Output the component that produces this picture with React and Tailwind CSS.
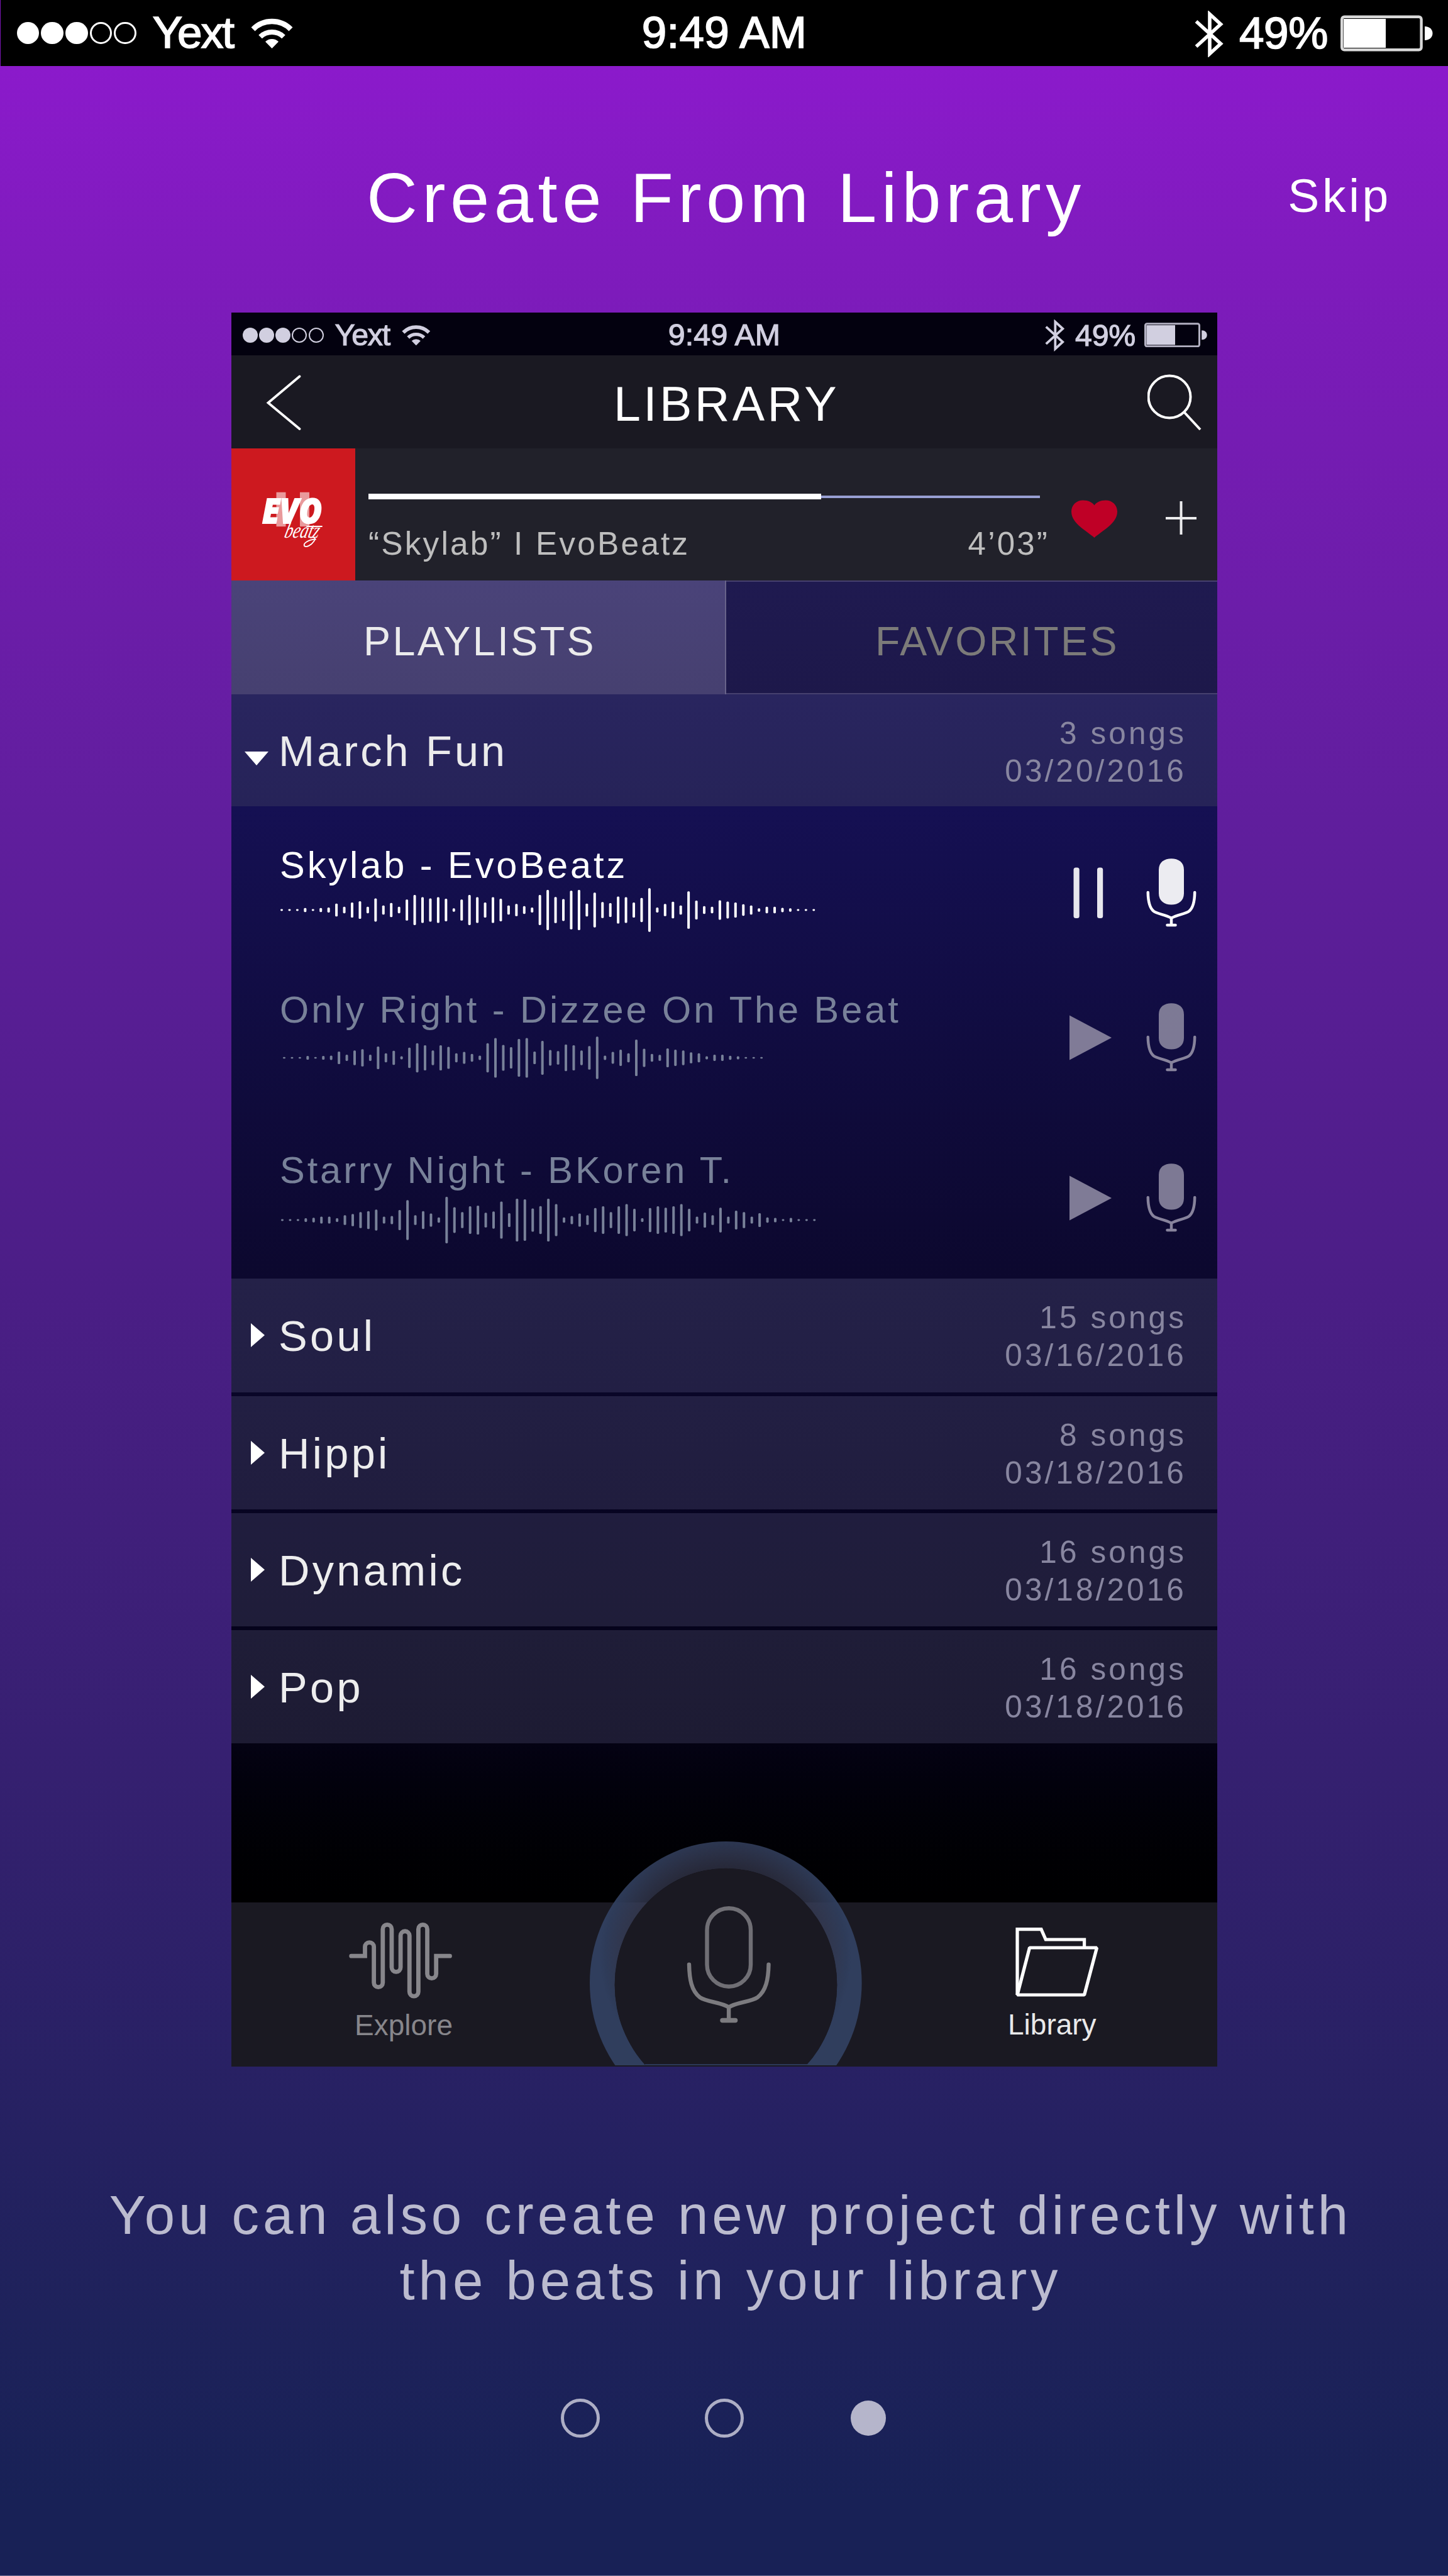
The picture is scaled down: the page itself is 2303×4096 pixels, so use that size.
import React from "react";

const WAVE_A = [
  12, 12, 12, 27, 12, 27, 32, 84, 42, 98, 114, 42, 150, 60, 92, 42, 137, 195, 167, 151, 167, 146, 22,
  137, 195, 167, 98, 167, 146, 60, 80, 50, 32, 195, 260, 169, 142, 251, 260, 84, 225, 104, 90, 176,
  167, 98, 156, 282, 32, 80, 108, 60, 242, 122, 50, 42, 127, 109, 98, 75, 60, 22, 42, 42, 28, 22, 12,
  12, 12,
];

const WAVE_B = [
  11, 11, 11, 25, 11, 25, 28, 82, 40, 95, 112, 40, 147, 58, 92, 20, 132, 189, 163, 95, 163, 143, 58, 78,
  50, 28, 189, 257, 167, 139, 245, 257, 82, 219, 101, 88, 172, 163, 95, 153, 274, 28, 77, 105, 58, 237,
  118, 50, 39, 123, 105, 95, 72, 58, 20, 40, 40, 26, 20, 11, 11, 11,
];

const WAVE_C = [...WAVE_A].reverse().map((h) => (h > 12 ? h * 1.067 : h));

const SONGS = [
  {
    title: "Skylab - EvoBeatz",
    wave: WAVE_A,
    playing: true,
    row: "h-[230px] text-white",
    waveBox: "mt-[2px] ml-[1px] text-white",
  },
  {
    title: "Only Right - Dizzee On The Beat",
    wave: WAVE_B,
    row: "h-[255px] text-[#788199]",
    waveBox: "mt-[7px] ml-[5px]",
  },
  {
    title: "Starry Night - BKoren T.",
    wave: WAVE_C,
    row: "h-[266px] text-[#788199]",
    waveBox: "mt-[10px] ml-[2px]",
  },
];

const PLAYLISTS = [
  { name: "Soul", songs: "15 songs", date: "03/16/2016", row: "h-[181px] from-[#242148] to-[#221f44]" },
  { name: "Hippi", songs: "8 songs", date: "03/18/2016", row: "h-[180px] from-[#221f43] to-[#201d3e]" },
  { name: "Dynamic", songs: "16 songs", date: "03/18/2016", row: "h-[180px] from-[#201d3e] to-[#1f1d39]" },
  { name: "Pop", songs: "16 songs", date: "03/18/2016", row: "h-[180px] from-[#1f1d38] to-[#1d1b33]" },
];

/* Sized entirely in em so that the same bar serves both screens. */
function StatusBar() {
  return (
    <div className="grid h-[1.479em] grid-cols-[1fr_auto_1fr] items-center leading-none [-webkit-text-stroke:0.024em_currentColor]">
      <div className="flex items-center pl-[0.365em]">
        <div className="flex gap-[0.043em]">
          {[true, true, true, false, false].map((full, i) => (
            <span
              key={i}
              className={
                full
                  ? "size-[0.5em] rounded-full bg-current"
                  : "size-[0.5em] rounded-full border-[0.045em] border-current"
              }
            />
          ))}
        </div>
        <span className="-mt-[0.02em] ml-[0.37em] w-[2.2em] tracking-[-0.025em]">Yext</span>
        <svg viewBox="0 0 67 49" className="h-[0.69em] w-[0.944em]" fill="none" stroke="currentColor">
          <path d="M3.5 18.5a42.5 42.5 0 0 1 60 0" strokeWidth="8.5" />
          <path d="M15 30.5a26.5 26.5 0 0 1 37 0" strokeWidth="8" />
          <path d="M33.5 49L23 38.3a15 15 0 0 1 21 0z" fill="currentColor" stroke="none" />
        </svg>
      </div>
      <span className="-mt-[0.02em] tracking-[0.004em]">9:49 AM</span>
      <div className="flex items-center justify-end pr-[0.34em]">
        <svg
          viewBox="0 0 46 74"
          className="mt-[0.03em] h-[1.042em] w-[0.648em]"
          fill="none"
          stroke="currentColor"
          strokeWidth="5.600"
        >
          <path d="M2.5 17L41.5 52.5L24 68.500V5.500L41.5 21.500L2.5 57" />
        </svg>
        <span className="ml-[0.355em] tracking-[-0.005em]">49%</span>
        <svg viewBox="0 0 147 58" className="ml-[0.28em] h-[0.817em] w-[2.07em]">
          <rect x="2.2" y="2.7" width="126.400" height="52.600" rx="4" fill="none" stroke="currentColor" strokeWidth="4.400" opacity="0.85" />
          <rect x="5" y="6" width="67" height="46" fill="currentColor" />
          <path d="M134 18c8 0 12.500 5 12.500 11s-4.500 11-12.500 11z" fill="currentColor" />
        </svg>
      </div>
    </div>
  );
}

function MicIcon() {
  return (
    <svg viewBox="0 0 80 109" className="h-[109px] w-[80px]" fill="none">
      <path
        d="M20 18C20 6 29 0.300 40 0.300S60 6 60 18V55.500C60 67.500 51 73.500 40 73.500S20 67.500 20 55.500Z"
        fill="currentColor"
        opacity="0.92"
      />
      <g stroke="currentColor" strokeWidth="4.500" strokeLinecap="round">
        <path d="M2.800 54C3 68 5 78.500 12 84C18 88.500 30 89 40 94.800C50 89 62 88.500 68 84C75 78.500 77 68 77.200 54" />
        <path d="M40 95V105" strokeLinecap="butt" />
        <path d="M33.500 106H46.500" />
      </g>
    </svg>
  );
}

function Waveform({ bars }) {
  return (
    <svg width={bars.length * 12.445} height="78" fill="currentColor">
      {bars.map((v, i) => {
        const h = v * 0.2457;
        return <rect key={i} x={i * 12.445} y={39 - h / 2} width="4" height={h} rx="1.600" />;
      })}
    </svg>
  );
}

function Meta({ songs, date }) {
  return (
    <div className="mt-[32px] ml-auto pr-[49px] text-right text-[49.5px] leading-[60px] tracking-[4.1px] text-[#8886a0]">
      <div>{songs}</div>
      <div>{date}</div>
    </div>
  );
}

function SongRow({ song }) {
  return (
    <div className={"flex items-start pl-[77px] pr-[33px] " + song.row}>
      <div className="pt-[64px]">
        <div className="text-[59.5px] leading-none tracking-[3.95px] whitespace-nowrap">{song.title}</div>
        <div className={song.waveBox}>
          <Waveform bars={song.wave} />
        </div>
      </div>
      <div className={song.playing ? "mt-[83px] ml-auto flex items-center gap-[55px]" : "mt-[83px] ml-auto flex items-center gap-[55px] text-[#87839c]"}>
        <svg viewBox="0 0 67 82" className="h-[82px] w-[67px]" fill="currentColor">
          {song.playing ? (
            <g opacity="0.9">
              <rect x="6.500" y="0.500" width="9.200" height="80.500" rx="3.500" />
              <rect x="44" y="0.500" width="9.200" height="80.500" rx="3.500" />
            </g>
          ) : (
            <path d="M0 5.500L67 41L0 76.500Z" opacity="0.94" />
          )}
        </svg>
        <MicIcon />
      </div>
    </div>
  );
}

function PlaylistRow({ item }) {
  return (
    <div className={"flex items-start bg-linear-to-b " + item.row}>
      <svg viewBox="0 0 22 38" className="mt-[71px] ml-[31px] h-[38px] w-[22px]" fill="#fff">
        <path d="M0 0L22 19L0 38Z" />
      </svg>
      <div className="mt-[58px] ml-[22px] text-[68.5px] leading-none tracking-[4.3px] text-[#ededee]">{item.name}</div>
      <Meta songs={item.songs} date={item.date} />
    </div>
  );
}

function CoverArt() {
  return (
    <svg viewBox="0 0 197 210" className="h-[210px] w-[197px] bg-[#cd191f]">
      <g fill="#fff" fillOpacity="0.56">
        <rect x="71.500" y="69.700" width="15" height="54.500" />
        <rect x="109" y="69.700" width="15" height="54.500" />
      </g>
      <text
        x="49"
        y="118.500"
        fill="#fff"
        stroke="#fff"
        strokeWidth="1.800"
        fontSize="55"
        fontStyle="italic"
        fontWeight="800"
        textLength="95"
        lengthAdjust="spacingAndGlyphs"
        className="font-['Open_Sans',sans-serif]"
      >
        EVO
      </text>
      <text
        x="0"
        y="0"
        fill="#fff"
        fontSize="35"
        fontStyle="italic"
        textLength="55"
        lengthAdjust="spacingAndGlyphs"
        transform="translate(83 142) skewX(-14)"
        className="font-['Liberation_Serif',serif]"
      >
        beatz
      </text>
      <g fill="none" stroke="#fff" strokeWidth="1.800" strokeLinecap="round">
        <path d="M120 124H144" />
        <path d="M126 142C132 140 135 143 131 148C127 154 119 158 116 155C114 151 122 145 134 144.500" />
      </g>
    </svg>
  );
}

function Player() {
  return (
    <div className="flex h-[210px] bg-[#21212a]">
      <CoverArt />
      <div className="ml-[21px] w-[1083px]">
        <div className="mt-[72px] flex h-[9px] w-[1068px] items-center">
          <div className="h-[9px] w-[720px] bg-white" />
          <div className="h-[4px] flex-1 bg-[#989fd3]" />
        </div>
        <div className="mt-[45px] flex items-start justify-between text-[51.5px] leading-none text-[#bebebe]">
          <span className="tracking-[3.1px]">“Skylab” I EvoBeatz</span>
          <span className="text-[51px] tracking-[3.2px]">4’03”</span>
        </div>
      </div>
      <svg viewBox="0 0 73 60" className="mt-[82px] ml-[35px] h-[60px] w-[73px]" fill="#bf0026">
        <path d="M36.500 60C26 50 0 38 0 18.500C0 8 8 0.500 18.500 0.500C27 0.500 33.500 4 36.500 8.500C39.500 4 46 0.500 54.500 0.500C65 0.500 73 8 73 18.500C73 38 47 50 36.500 60Z" />
      </svg>
      <svg viewBox="0 0 49 53" className="mt-[84px] ml-[77px] h-[53px] w-[49px]" stroke="#ececee" strokeWidth="4">
        <path d="M24.500 0V53M0 27H49" />
      </svg>
    </div>
  );
}

function RecordButton() {
  return (
    <svg viewBox="0 0 433 356" className="absolute bottom-[2px] left-[570px] h-[356px] w-[433px]">
      <defs>
        <radialGradient id="ring" gradientUnits="userSpaceOnUse" cx="216" cy="182" r="200">
          <stop offset="0.680" stopColor="#3f4159" stopOpacity="0.600" />
          <stop offset="0.960" stopColor="#303e5d" stopOpacity="0.930" />
          <stop offset="1" stopColor="#303e5d" />
        </radialGradient>
      </defs>
      <path
        fillRule="evenodd"
        fill="url(#ring)"
        d="M0 225a216.300 225 0 1 1 432.600 0a216.300 225 0 1 1 -432.600 0ZM39.800 228a176.700 185 0 1 0 353.400 0a176.700 185 0 1 0 -353.400 0Z"
      />
      <ellipse cx="216.500" cy="228" rx="176.900" ry="185.200" fill="#1a1922" />
      <rect x="88" y="354" width="258" height="2" fill="#2c3958" />
      <g transform="translate(154.500 102.700)" fill="none" strokeWidth="6.400">
        <rect x="32" y="3.500" width="69.500" height="124.500" rx="34.700" stroke="#706f75" />
        <g stroke="#7c7b7f" strokeLinecap="round">
          <path d="M3.500 93C4 116 7 135 21 145.500C31 152.500 55 153 66.600 161C78 153 102 152.500 112 145.500C126 135 129.500 116 130 93" />
          <path d="M66.600 161V180" strokeLinecap="butt" />
          <path d="M56.500 181.700H77" strokeWidth="7.500" />
        </g>
      </g>
    </svg>
  );
}

function BottomNav() {
  return (
    <div className="relative flex h-[261px] items-start bg-[#1a1922]">
      <div className="mt-[32px] ml-[187px] w-[170px] text-[#87868b]">
        <svg
          viewBox="0 0 165 121"
          className="h-[121px] w-[165px]"
          fill="none"
          stroke="currentColor"
          strokeWidth="6.800"
          strokeLinecap="round"
        >
          <path d="M3.700 53.200H25.500V38.600a7.070 7.070 0 0 1 14.150 0V95.500a7.070 7.070 0 0 0 14.150 0V10.500a7.070 7.070 0 0 1 14.150 0V71.300a7.070 7.070 0 0 0 14.150 0V20.800a7.070 7.070 0 0 1 14.150 0V110a7.070 7.070 0 0 0 14.150 0V10.500a7.070 7.070 0 0 1 14.150 0V81.500a7.070 7.070 0 0 0 14.150 0V53.200H160.500" />
        </svg>
        <div className="mt-[19px] ml-[9px] text-[46px] leading-none">Explore</div>
      </div>
      <RecordButton />
      <div className="mt-[40px] ml-auto w-[333px] text-white">
        <svg viewBox="0 0 133 110" className="ml-[12px] h-[110px] w-[133px]" fill="none" stroke="currentColor" strokeWidth="5.200">
          <path d="M3 107V2.700H41L48.200 19H109.600V31" />
          <path d="M3 107L22.500 32H129.500L109.600 107Z" strokeLinejoin="bevel" />
        </svg>
        <div className="mt-[21px] text-[46px] leading-none text-[#e9e9ea]">Library</div>
      </div>
    </div>
  );
}

function LibraryScreen() {
  return (
    <div className="ml-[368px] flex w-[1568px] shrink-0 flex-col bg-[#05031a]">
      <div className="h-[68px] overflow-hidden bg-[#03010f] text-[48.33px] text-[#d1cfe0]">
        <StatusBar />
      </div>

      <div className="flex h-[148px] items-start bg-[#1a1922] text-white">
        <svg viewBox="0 0 56 90" className="mt-[30px] ml-[55px] h-[90px] w-[56px]" fill="none" stroke="currentColor" strokeWidth="3.800" strokeLinecap="round">
          <path d="M53.500 3.500L3.500 45.500L53.500 87" />
        </svg>
        <div className="mt-[39px] ml-[497px] text-[77px] leading-none tracking-[4.4px]">LIBRARY</div>
        <svg viewBox="0 0 86 90" className="mt-[30px] mr-[25px] ml-auto h-[90px] w-[86px]" fill="none" stroke="currentColor" strokeWidth="4">
          <circle cx="35" cy="36" r="33.500" />
          <path d="M58.500 60.500L84 88" />
        </svg>
      </div>

      <Player />

      <div className="grid h-[181px] grid-cols-[787px_1fr] text-[64.5px] leading-none">
        <div className="border-r-2 border-[#67628a] bg-linear-to-b from-[#4a4379] to-[#464070] pt-[65px] pl-[210px] tracking-[3.4px] text-[#ebebec]">
          PLAYLISTS
        </div>
        <div className="border-y-2 border-[#46406f] bg-linear-to-b from-[#1f1a50] to-[#1d184a] pt-[63px] pl-[237px] tracking-[3.4px] text-[#7c7b79]">
          FAVORITES
        </div>
      </div>

      <div className="flex h-[178px] items-start bg-linear-to-b from-[#29255f] to-[#262358]">
        <svg viewBox="0 0 38 22" className="mt-[91px] ml-[21px] h-[22px] w-[38px]" fill="#fff">
          <path d="M0 0H38L19 22Z" />
        </svg>
        <div className="mt-[57px] ml-[16px] text-[68.5px] leading-none tracking-[4.1px] text-[#ebebec]">March Fun</div>
        <Meta songs="3 songs" date="03/20/2016" />
      </div>

      <div className="h-[751px] bg-linear-to-b from-[#151053] to-[#0c082e]">
        {SONGS.map((song) => (
          <SongRow key={song.title} song={song} />
        ))}
      </div>

      <div className="flex flex-col gap-[6px] bg-linear-to-b from-[#0c082e] to-[#040216]">
        {PLAYLISTS.map((item) => (
          <PlaylistRow key={item.name} item={item} />
        ))}
      </div>

      <div className="h-[253px] bg-linear-to-b from-[#040213] to-[#000001]" />

      <BottomNav />
    </div>
  );
}

export default function App() {
  return (
    <div className="flex h-[4096px] w-[2303px] flex-col overflow-hidden border-b border-[#6f7395] bg-[linear-gradient(180deg,#901bd1_0%,#8b1acb_2.6%,#7f1bbd_10%,#611e9e_31%,#4b1e86_50%,#362071_68%,#252161_83%,#1e225b_90%,#182156_97%,#182156_100%)] font-['Liberation_Sans',Arial,sans-serif]">
      <div className="h-[105px] shrink-0 border-l border-[#7a17b5] bg-black text-[71px] text-white">
        <StatusBar />
      </div>

      <div className="flex h-[392px] shrink-0 items-start text-white">
        <h1 className="mt-[154px] ml-[583px] text-[112px] leading-none tracking-[7.45px] whitespace-nowrap">
          Create From Library
        </h1>
        <button className="mt-[169px] mr-[90px] ml-auto text-[75px] leading-none tracking-[4.7px]">Skip</button>
      </div>

      <LibraryScreen />

      <p className="mt-[184px] shrink-0 pl-[21px] text-center text-[87px] leading-[104px] tracking-[5.95px] whitespace-nowrap text-[#bbbbcf]">
        You can also create new project directly with
        <br />
        the beats in your library
      </p>

      <div className="mt-[136px] flex shrink-0 items-center justify-center gap-[167px]">
        <span className="size-[62px] rounded-full border-[5.5px] border-[#adaec5]" />
        <span className="size-[62px] rounded-full border-[5.5px] border-[#adaec5]" />
        <span className="mx-[3px] size-[56px] rounded-full bg-[#b5b5cb]" />
      </div>
    </div>
  );
}
